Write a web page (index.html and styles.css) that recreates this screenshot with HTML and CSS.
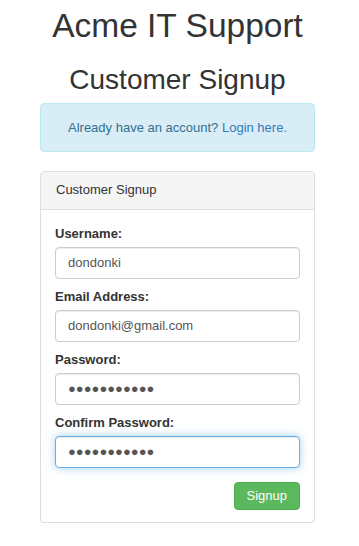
FILE: index.html
```html
<!DOCTYPE html>
<html lang="en">
<head>
<meta charset="utf-8">
<title>Customer Signup</title>
<link rel="stylesheet" href="styles.css">
</head>
<body>
<div class="page">
  <h1 class="title">Acme IT Support</h1>
  <h2 class="subtitle">Customer Signup</h2>
  <div class="column">
    <div class="alert">Already have an account? <a class="alert-link" href="#">Login here.</a></div>
    <div class="panel">
      <div class="panel-heading">Customer Signup</div>
      <form class="panel-body">
        <div class="form-group">
          <label class="label" for="username">Username:</label>
          <input class="input" id="username" type="text" value="dondonki">
        </div>
        <div class="form-group">
          <label class="label" for="email">Email Address:</label>
          <input class="input" id="email" type="text" value="dondonki@gmail.com">
        </div>
        <div class="form-group">
          <label class="label" for="password">Password:</label>
          <input class="input" id="password" type="text" value="●●●●●●●●●●●">
        </div>
        <div class="form-group">
          <label class="label" for="confirm">Confirm Password:</label>
          <input class="input input-focus" id="confirm" type="text" value="●●●●●●●●●●●">
        </div>
        <div class="actions">
          <button class="btn-success" type="button">Signup</button>
        </div>
      </form>
    </div>
  </div>
</div>
</body>
</html>
```
FILE: styles.css
```css
* { box-sizing: border-box; }
html, body { margin: 0; padding: 0; background: #fff; }
body {
  font-family: "Liberation Sans", Arial, Helvetica, sans-serif;
  font-size: 13px;
  line-height: 18px;
  color: #333;
}
.page {
  width: 355px;
  display: flex;
  flex-direction: column;
}
.title {
  margin: 8px 0 0;
  font-size: 33.5px;
  line-height: 1.1;
  font-weight: 500;
  text-align: center;
  color: #333;
}
.subtitle {
  margin: 20px 0 7px;
  font-size: 28px;
  line-height: 1.1;
  font-weight: 500;
  text-align: center;
  color: #333;
}
.column {
  margin: 0 40px;
  display: flex;
  flex-direction: column;
}
.alert {
  background: #d9edf7;
  border: 1px solid #bce8f1;
  border-radius: 4px;
  color: #31708f;
  padding: 15px 15px 14px;
  text-align: center;
  margin-bottom: 19px;
}
.alert-link {
  color: #337ab7;
  text-decoration: none;
}
.panel {
  border: 1px solid #ddd;
  border-radius: 4px;
  background: #fff;
  box-shadow: 0 1px 1px rgba(0,0,0,.05);
}
.panel-heading {
  background: #f5f5f5;
  border-bottom: 1px solid #ddd;
  border-radius: 3px 3px 0 0;
  padding: 9px 15px 10px;
  color: #333;
}
.panel-body {
  margin: 0;
  padding: 15px 14px 12px;
  display: flex;
  flex-direction: column;
}
.form-group {
  display: flex;
  flex-direction: column;
  margin-bottom: 9px;
}
.label {
  font-weight: bold;
  margin-bottom: 4px;
  line-height: 18px;
}
.input {
  height: 32px;
  width: 100%;
  padding: 6px 12px;
  font-family: "Liberation Sans", Arial, Helvetica, sans-serif;
  font-size: 13px;
  line-height: 18px;
  color: #555;
  background: #fff;
  border: 1px solid #ccc;
  border-radius: 4px;
  box-shadow: inset 0 1px 1px rgba(0,0,0,.075);
  outline: none;
}
.input-focus {
  border-color: #66afe9;
  box-shadow: inset 0 1px 1px rgba(0,0,0,.075), 0 0 8px rgba(102,175,233,.6);
}
.actions {
  display: flex;
  justify-content: flex-end;
  margin-top: 5px;
}
.btn-success {
  font-family: "Liberation Sans", Arial, Helvetica, sans-serif;
  font-size: 13px;
  line-height: 18px;
  padding: 4px 12px;
  color: #fff;
  background: #5cb85c;
  border: 1px solid #4cae4c;
  border-radius: 4px;
}
```
